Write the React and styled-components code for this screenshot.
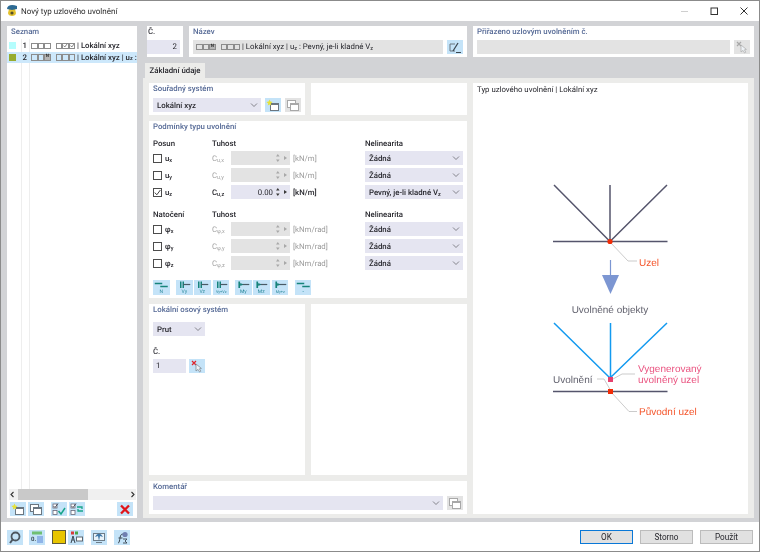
import React from 'react';
import styled, { createGlobalStyle } from 'styled-components';

const GlobalStyle = createGlobalStyle`
  html, body {
    margin: 0;
    padding: 0;
    background: #fff;
  }
  * {
    box-sizing: border-box;
  }
  body {
    font-family: Roboto, "Liberation Sans", sans-serif;
    font-size: 7.8px;
    color: #26262c;
    text-rendering: geometricPrecision;
  }
`;

const Window = styled.div`
  width: 760px;
  height: 552px;
  display: flex;
  flex-direction: column;
  border: 1px solid #8b8b8b;
  overflow: hidden;
  background: #fff;
  filter: blur(0.3px);
`;

const TitleBar = styled.div`
  height: 20px;
  flex: none;
  display: flex;
  align-items: center;
  padding: 0 11px 0 5px;
  gap: 3px;
  background: #fff;
`;

const TitleText = styled.div`
  flex: 1;
  font-size: 8px;
  color: #2b2b2b;
`;

const WindowButtons = styled.div`
  display: flex;
  align-items: center;
  gap: 22px;
`;

const Body = styled.div`
  flex: 1;
  display: flex;
  gap: 6px;
  padding: 5px 5px 4px 6px;
  background: #d2d3d6;
  min-height: 0;
`;

const Sidebar = styled.div`
  width: 130px;
  flex: none;
  display: flex;
  flex-direction: column;
  background: #fff;
`;

const Main = styled.div`
  flex: 1;
  min-width: 0;
  display: flex;
  flex-direction: column;
`;

const TopRow = styled.div`
  height: 31px;
  flex: none;
  display: flex;
  gap: 6px;
  padding-left: 4px;
`;

const Card = styled.div`
  background: #fff;
  width: ${(p) => (p.$width ? `${p.$width}px` : 'auto')};
  height: ${(p) => (p.$height ? `${p.$height}px` : 'auto')};
  flex: ${(p) => (p.$width || p.$height ? 'none' : '1')};
  padding: 0 4px;
`;

const NumberCard = styled(Card)`
  padding: 0 3px 0 0;
`;

const CardTitle = styled.div`
  height: 12px;
  line-height: 12px;
  font-weight: 500;
  color: ${(p) => (p.$plain ? '#3b3b42' : '#566a96')};
  padding-left: ${(p) => p.$indent || 0}px;
  margin-top: ${(p) => p.$top || 0}px;
  white-space: nowrap;
`;

const FieldRow = styled.div`
  display: flex;
  align-items: center;
  gap: ${(p) => (p.$tight ? 3 : 4)}px;
  margin-top: ${(p) => p.$top || 2}px;
`;

const Field = styled.div`
  height: 14px;
  line-height: 14px;
  padding: 0 3px;
  background: ${(p) => (p.$disabled ? '#e3e3e3' : '#e5e5f1')};
  color: ${(p) => (p.$disabled && !p.$dark ? '#8d8d8d' : '#26262c')};
  width: ${(p) => (p.$width ? `${p.$width}px` : 'auto')};
  flex: ${(p) => (p.$width ? 'none' : '1')};
  white-space: pre;
  overflow: hidden;
  display: flex;
  align-items: center;
  justify-content: ${(p) => (p.$right ? 'flex-end' : 'flex-start')};
`;

const SelectBox = styled.div`
  height: 14px;
  display: flex;
  align-items: center;
  justify-content: space-between;
  padding: 0 3px 0 4px;
  background: #e5e5f1;
  font-weight: 500;
  width: ${(p) => (p.$width ? `${p.$width}px` : 'auto')};
  flex: ${(p) => (p.$width ? 'none' : '1')};
  white-space: nowrap;
`;

const IconButton = styled.div`
  width: 16px;
  height: 14px;
  flex: none;
  display: flex;
  align-items: center;
  justify-content: center;
  background: ${(p) => (p.$off ? '#e3e3e3' : '#c4e3f8')};
`;

const Sub = styled.span`
  font-size: 5.5px;
  position: relative;
  top: 1.5px;
`;

/* list on the left */
const ListBody = styled.div`
  flex: 1;
  min-height: 0;
  display: flex;
  flex-direction: column;
  padding-top: 1px;
  background: linear-gradient(#eeeeee, #eeeeee) 14px 0 / 1px 100% no-repeat,
    linear-gradient(#eeeeee, #eeeeee) 22px 0 / 1px 100% no-repeat;
`;

const ListRow = styled.div`
  height: 11.5px;
  display: flex;
  align-items: center;
  white-space: pre;
  overflow: hidden;
  font-weight: 500;
  background: ${(p) => (p.$active ? '#cde8fb' : 'transparent')};
`;

const Swatch = styled.span`
  width: 7px;
  height: 7px;
  margin: 0 6px 0 2px;
  flex: none;
  background: ${(p) => p.$color};
`;

const RowNumber = styled.span`
  width: 5px;
  margin-right: 4px;
  flex: none;
  text-align: right;
`;

const Glyphs = styled.span`
  display: inline-flex;
  flex: none;
  margin-right: ${(p) => p.$gap}px;
`;

const Glyph = styled.span`
  width: 6.5px;
  height: 6.5px;
  flex: none;
  border: 0.8px solid #8c8c8c;
  display: inline-flex;
  align-items: center;
  justify-content: center;
  font-size: 4.5px;
  line-height: 4.5px;
  font-weight: 700;
  color: #2e2e2e;
  background: ${(p) => (p.$filled ? '#b5b5b5' : 'transparent')};
`;

const ScrollBar = styled.div`
  height: 11px;
  flex: none;
  margin: 0 1px 0 2px;
  display: flex;
  align-items: center;
  background: #f0f0f0;
`;

const ScrollThumb = styled.div`
  width: 70px;
  height: 100%;
  background: #c9c9c9;
  margin: 0 auto 0 2px;
`;

const ListTools = styled.div`
  height: 18px;
  flex: none;
  display: flex;
  align-items: center;
  padding: 0 3px;
  gap: 2px;
`;

const ToolGap = styled.div`
  width: ${(p) => p.$w}px;
  flex: none;
`;

/* tab area */
const TabStrip = styled.div`
  height: 15px;
  margin-top: 6px;
  padding-left: 2px;
  flex: none;
  display: flex;
`;

const Tab = styled.div`
  width: 60px;
  line-height: 16px;
  text-align: center;
  font-weight: 500;
  background: #ececea;
`;

const TabPanel = styled.div`
  flex: 1;
  min-height: 0;
  display: grid;
  grid-template-columns: 318px 275px;
  gap: 6px;
  padding: 5px 6px 4px;
  background: #ececea;
`;

const LeftStack = styled.div`
  display: flex;
  flex-direction: column;
  gap: 6px;
`;

const SplitRow = styled.div`
  display: flex;
  gap: 6px;
`;

const ConditionGrid = styled.div`
  display: grid;
  grid-template-columns: 59px 19px 59px 75px 98px;
  grid-template-rows: 11px;
  grid-auto-rows: 14px;
  row-gap: 3px;
  align-items: center;
  margin-top: ${(p) => p.$top}px;
`;

const HeadCell = styled.div`
  font-weight: 500;
  grid-column: ${(p) => p.$column || 'auto'};
  line-height: 12px;
  margin-top: 2px;
`;

const CheckCell = styled.label`
  display: flex;
  align-items: center;
  gap: 3px;
  font-weight: 500;
`;

const CheckBox = styled.span`
  width: 9px;
  height: 9px;
  flex: none;
  display: flex;
  align-items: center;
  justify-content: center;
  border: 1px solid #4c4c4c;
  background: #fff;
`;

const StiffLabel = styled.div`
  color: ${(p) => (p.$on ? '#26262c' : '#a3a3a3')};
  font-weight: ${(p) => (p.$on ? 500 : 400)};
`;

const Spin = styled.div`
  height: 14px;
  display: flex;
  align-items: center;
  justify-content: flex-end;
  gap: 2px;
  padding-right: 2px;
  background: ${(p) => (p.$on ? '#e5e5f1' : '#e3e3e3')};
`;

const Unit = styled.div`
  padding-left: 3px;
  color: ${(p) => (p.$on ? '#26262c' : '#9a9a9a')};
  font-weight: ${(p) => (p.$on ? 500 : 400)};
`;

const ReleaseBar = styled.div`
  display: flex;
  margin-top: 10px;
`;

const ReleaseButton = styled.div`
  width: 16.5px;
  height: 15px;
  margin-left: ${(p) => p.$gap || 1.8}px;
  flex: none;
  background: #c4e3f8;
  &:first-child {
    margin-left: 0;
  }
`;

const DiagramCard = styled.div`
  background: #fff;
  display: flex;
  flex-direction: column;
`;

const DiagramTitle = styled.div`
  height: 14px;
  line-height: 14px;
  padding-left: 4px;
  flex: none;
`;

/* bottom bar */
const Footer = styled.div`
  height: 29px;
  flex: none;
  display: flex;
  align-items: center;
  justify-content: space-between;
  padding: 1px 6px 0 6px;
  background: #fff;
`;

const FooterTools = styled.div`
  display: flex;
  align-items: center;
`;

const FootTool = styled(IconButton)`
  height: 15px;
  margin-left: ${(p) => p.$gap}px;
`;

const ColorChip = styled.div`
  width: 14px;
  height: 14px;
  margin-left: 7px;
  margin-right: 2px;
  background: #e8c500;
  border: 1px solid #5f5a3a;
`;

const DialogButtons = styled.div`
  display: flex;
  gap: 7px;
`;

const DialogButton = styled.button`
  width: 53px;
  height: 14px;
  padding: 0;
  font: inherit;
  font-size: 8.2px;
  color: #26262c;
  background: #e1e1e1;
  border: 1px solid ${(p) => (p.$primary ? '#0a78d7' : '#bcbcbc')};
`;

const Chevron = () => (
  <svg width="8" height="6" viewBox="0 0 8 6">
    <path d="M1 1.5 L4 4.5 L7 1.5" fill="none" stroke="#77777f" strokeWidth="0.9" />
  </svg>
);

const Spinner = ({ on }) => (
  <svg width="13" height="10" viewBox="0 0 13 10">
    <path d="M1 3.5 L2.8 1 L4.6 3.5Z M1 6.5 L2.8 9 L4.6 6.5Z" fill={on ? '#3a3a3a' : '#a8a8a8'} />
    <path d="M9 3 L12 5 L9 7Z" fill={on ? '#3a3a3a' : '#a8a8a8'} />
  </svg>
);

const Tick = ({ color = '#444' }) => (
  <svg width="7" height="7" viewBox="0 0 7 7">
    <path d="M0.8 3.6 L2.8 5.8 L6.4 1" fill="none" stroke={color} strokeWidth="1" />
  </svg>
);

const Logo = () => (
  <svg width="12" height="14" viewBox="0 0 12 14">
    <path d="M2 9 C2 13 10 13 10 9 L9 5 L3 5Z" fill="#e4c22e" />
    <circle cx="6" cy="9" r="1.6" fill="#54502a" />
    <path d="M1 5 C1 1 6 0 11 2 L11 5 L6 6Z" fill="#2d6a94" />
  </svg>
);

const NewIcon = () => (
  <svg width="14" height="13" viewBox="0 0 14 13">
    <rect x="4.5" y="4.5" width="8" height="7" fill="#fff" stroke="#6b7680" />
    <rect x="4.5" y="4.5" width="8" height="1.5" fill="#6b7680" />
    <path d="M3.5 0.5 L4.4 2.6 L6.6 3 L4.8 4.4 L5.2 6.6 L3.5 5.4 L1.8 6.6 L2.2 4.4 L0.4 3 L2.6 2.6Z" fill="#e6e23a" />
  </svg>
);

const CopyIcon = ({ off }) => (
  <svg width="14" height="13" viewBox="0 0 14 13">
    <rect x="1.5" y="1.5" width="8" height="7" fill="#fff" stroke={off ? '#a8a8a8' : '#6b7680'} />
    <rect x="4.5" y="4.5" width="8" height="7" fill="#fff" stroke={off ? '#a8a8a8' : '#6b7680'} />
    <rect x="4.5" y="4.5" width="8" height="1.5" fill={off ? '#a8a8a8' : '#6b7680'} />
  </svg>
);

const CheckListIcon = ({ swap }) => (
  <svg width="14" height="13" viewBox="0 0 14 13">
    <rect x="1" y="1" width="4" height="4" fill="#fff" stroke="#667" strokeWidth="0.8" />
    <rect x="1" y="7.5" width="4" height="4" fill="#fff" stroke="#667" strokeWidth="0.8" />
    <path d="M1.5 3 L3 4.5 L6 0.5" fill="none" stroke="#334" strokeWidth="0.8" />
    {swap ? (
      <path d="M7 4 H12 V6 M13 8 H8 V6" fill="none" stroke="#17a58a" strokeWidth="1.3" />
    ) : (
      <path d="M6.5 8 L9 11 L13 5" fill="none" stroke="#17a58a" strokeWidth="1.5" />
    )}
  </svg>
);

const DeleteIcon = () => (
  <svg width="12" height="11" viewBox="0 0 12 11">
    <path d="M2 1.5 L10 9.5 M10 1.5 L2 9.5" stroke="#e0161b" strokeWidth="2.3" />
  </svg>
);

const EditIcon = () => (
  <svg width="14" height="13" viewBox="0 0 14 13">
    <path d="M2 3 H7 M2 3 V10 H7" fill="none" stroke="#6b7680" />
    <path d="M5 10 L10 2" stroke="#3b4650" strokeWidth="1.3" />
    <path d="M8 11.5 H13" stroke="#3b4650" />
  </svg>
);

const PickIcon = ({ off }) => (
  <svg width="14" height="13" viewBox="0 0 14 13">
    <path d="M2 1 L6 5 M6 1 L2 5" stroke={off ? '#a8a8a8' : '#e0242c'} strokeWidth="1.2" />
    <path d="M6 4 L6 11 L8 9.4 L9.6 12 L10.8 11.2 L9.4 8.8 L11.4 8.4Z" fill="#eef2f6" stroke={off ? '#aaa' : '#77828c'} strokeWidth="0.7" />
  </svg>
);

const ReleaseIcon = ({ label, kind }) => (
  <svg width="16.5" height="15" viewBox="0 0 16 15">
    {kind === 'n' && <path d="M1.5 3.5 H9 M7 6.5 H14.5" stroke="#16837b" strokeWidth="1.5" />}
    {kind === 'v' && (
      <>
        <path d="M4.5 1.5 V8 M7 1.5 V8" stroke="#16837b" strokeWidth="1.5" />
        <path d="M7 4.5 H14" stroke="#4a5a66" strokeWidth="1.2" />
      </>
    )}
    {kind === 'm' && (
      <>
        <path d="M4 1.5 V8" stroke="#16837b" strokeWidth="1.7" />
        <path d="M5 4.5 H14" stroke="#4a5a66" strokeWidth="1.2" />
        <path d="M5 3 L8 4.5 L5 6Z" fill="#16837b" />
      </>
    )}
    <text x="8" y="13" textAnchor="middle" fontSize={label.length > 2 ? 3.8 : 5} fill="#2c8a9c" fontFamily="Roboto, sans-serif">
      {label}
    </text>
  </svg>
);

const FootIcon = ({ kind }) => (
  <svg width="14" height="13" viewBox="0 0 14 13">
    {kind === 'search' && (
      <>
        <circle cx="7.5" cy="5.5" r="4" fill="none" stroke="#4c5660" strokeWidth="1.8" />
        <path d="M5 8 L2 12" stroke="#4c5660" strokeWidth="2" />
      </>
    )}
    {kind === 'table' && (
      <>
        <rect x="2" y="0.5" width="10" height="3" fill="#6fbf73" />
        <text x="1" y="10" fontSize="6" fontWeight="700" fill="#3d4a55" fontFamily="Roboto, sans-serif">0.</text>
        <rect x="7" y="5" width="6" height="7" fill="#8fb4e8" />
      </>
    )}
    {kind === 'tree' && (
      <>
        <rect x="2" y="0.5" width="3" height="3" fill="#d93a3a" />
        <rect x="6" y="0.5" width="3" height="3" fill="#4aa64a" />
        <path d="M2 12 L4 5 L6 12 M3 9 H5" fill="none" stroke="#3b4650" />
        <rect x="7.5" y="6" width="6" height="4" fill="#fff" stroke="#5c6670" />
      </>
    )}
    {kind === 'view' && (
      <>
        <rect x="1.5" y="2.5" width="11" height="7" fill="#e9f3fa" stroke="#6d7d8a" />
        <path d="M3 6 C5 1.5 9 1.5 11 6 L8 5 L7 10 L6 5Z" fill="#3f78a8" />
        <path d="M4 11.5 H10" stroke="#6d7d8a" />
      </>
    )}
    {kind === 'fn' && (
      <>
        <path d="M3 12 C5 12 4.5 6 6 4 C6.5 3 7.5 3 8 3.4 M3.5 7 H7.5" fill="none" stroke="#3a4650" strokeWidth="1" />
        <path d="M8 8 H12 L10 10 L12 12 H8" fill="none" stroke="#3a4650" strokeWidth="0.9" />
        <circle cx="10" cy="3.5" r="2.6" fill="#6f7fb0" />
      </>
    )}
  </svg>
);

const ReleaseDiagram = () => (
  <svg width="275" height="417" viewBox="473 97 275 417" fontFamily="Liberation Sans, sans-serif" fontSize="10">
    <g fill="none" stroke="#55556c" strokeWidth="1.5">
      <path d="M554 185 L610 241.5 M610 185 V241.5 M667 185 L610 241.5" />
      <path d="M553 241.5 H667.5" />
    </g>
    <path d="M610 242 L628 261 H637" fill="none" stroke="#b5b5b5" strokeWidth="0.7" />
    <circle cx="610" cy="241.5" r="2.6" fill="#f22c06" />
    <text x="639" y="265.5" fill="#f4552b">Uzel</text>

    <path d="M610.5 260 V276" stroke="#7c96d2" strokeWidth="1.2" />
    <path d="M602 275 H619 L610.5 294Z" fill="#7c96d2" />

    <text x="610" y="312.5" textAnchor="middle" fill="#62626e">Uvolněné objekty</text>
    <path d="M554 323 L610 378 M610.5 323 V378 M667 323 L610 378" fill="none" stroke="#139af0" strokeWidth="1.5" />
    <path d="M553 391.5 H667.5" stroke="#55556c" strokeWidth="1.5" />
    <path d="M613 379 L622 374 H635 M597 379 H604 L611 391 M611 392 L629 411.5 H637" fill="none" stroke="#b5b5b5" strokeWidth="0.7" />
    <rect x="608" y="377" width="5" height="5" fill="#e6406e" />
    <rect x="608" y="389" width="5" height="5" fill="#f22c06" />
    <text x="638" y="371.5" fill="#ea5480">Vygenerovaný</text>
    <text x="638" y="383" fill="#ea5480">uvolněný uzel</text>
    <text x="553" y="383" fill="#62626e">Uvolnění</text>
    <text x="639" y="414.5" fill="#f4552b">Původní uzel</text>
  </svg>
);

const translationRows = [
  { axis: 'x', on: false, value: 'Žádná' },
  { axis: 'y', on: false, value: 'Žádná' },
  { axis: 'z', on: true, value: <>Pevný, je-li kladné V<Sub>z</Sub></> },
];

const rotationAxes = ['x', 'y', 'z'];

const releaseButtons = [
  { label: 'N', kind: 'n' },
  { label: 'Vy', kind: 'v', gap: 6.5 },
  { label: 'Vz', kind: 'v' },
  { label: 'Vy+Vz', kind: 'v' },
  { label: 'My', kind: 'm', gap: 6 },
  { label: 'Mz', kind: 'm' },
  { label: 'My+z', kind: 'm' },
  { label: '-', kind: 'n', gap: 6.5 },
];

const ConditionRow = ({ symbol, index, axis, on, unit, value, amount }) => (
  <>
    <CheckCell>
      <CheckBox>{on && <Tick />}</CheckBox>
      <span>{symbol}<Sub>{axis}</Sub></span>
    </CheckCell>
    <StiffLabel $on={on}>C<Sub>{index},{axis}</Sub></StiffLabel>
    <Spin $on={on}>
      {amount && <span>{amount}</span>}
      <Spinner on={on} />
    </Spin>
    <Unit $on={on}>{unit}</Unit>
    <SelectBox>
      <span>{value}</span>
      <Chevron />
    </SelectBox>
  </>
);

const App = () => {
  return (
    <>
      <GlobalStyle />
      <Window>
        <TitleBar>
          <Logo />
          <TitleText>Nový typ uzlového uvolnění</TitleText>
          <WindowButtons>
            <svg width="7" height="9" viewBox="0 0 7 9"><path d="M0 4.5 H7" stroke="#cfcfcf" /></svg>
            <svg width="8" height="8" viewBox="0 0 8 8"><rect x="1" y="1" width="6.5" height="6.5" fill="none" stroke="#333" /></svg>
            <svg width="8" height="8" viewBox="0 0 8 8"><path d="M0.5 0.5 L7.5 7.5 M7.5 0.5 L0.5 7.5" stroke="#333" /></svg>
          </WindowButtons>
        </TitleBar>

        <Body>
          <Sidebar>
            <Card $height={13}><CardTitle>Seznam</CardTitle></Card>
            <ListBody>
              <ListRow>
                <Swatch $color="#b5fdfd" />
                <RowNumber>1</RowNumber>
                <Glyphs $gap={5}><Glyph /><Glyph /><Glyph /></Glyphs>
                <Glyphs $gap={2}>
                  <Glyph /><Glyph><Tick /></Glyph><Glyph><Tick /></Glyph>
                </Glyphs>
                | Lokální xyz
              </ListRow>
              <ListRow $active>
                <Swatch $color="#97ac2f" />
                <RowNumber>2</RowNumber>
                <Glyphs $gap={5}><Glyph /><Glyph /><Glyph $filled>N</Glyph></Glyphs>
                <Glyphs $gap={2}><Glyph /><Glyph /><Glyph /></Glyphs>
                | Lokální xyz | u<Sub>z</Sub> : Pevný, je-li kladné V<Sub>z</Sub>
              </ListRow>
            </ListBody>
            <ScrollBar>
              <svg width="7" height="7" viewBox="0 0 7 7"><path d="M4.5 1 L2 3.5 L4.5 6" fill="none" stroke="#333" strokeWidth="1.1" /></svg>
              <ScrollThumb />
              <svg width="7" height="7" viewBox="0 0 7 7"><path d="M2.5 1 L5 3.5 L2.5 6" fill="none" stroke="#333" strokeWidth="1.1" /></svg>
            </ScrollBar>
            <ListTools>
              <IconButton><NewIcon /></IconButton>
              <IconButton><CopyIcon /></IconButton>
              <ToolGap $w={3} />
              <IconButton><CheckListIcon /></IconButton>
              <IconButton><CheckListIcon swap /></IconButton>
              <ToolGap $w={28} />
              <IconButton><DeleteIcon /></IconButton>
            </ListTools>
          </Sidebar>

          <Main>
            <TopRow>
              <NumberCard $width={36}>
                <CardTitle $plain $indent={1}>Č.</CardTitle>
                <FieldRow><Field $right>2</Field></FieldRow>
              </NumberCard>
              <Card $width={278}>
                <CardTitle>Název</CardTitle>
                <FieldRow>
                  <Field $disabled $dark>
                    <Glyphs $gap={5}><Glyph /><Glyph /><Glyph $filled>N</Glyph></Glyphs>
                    <Glyphs $gap={2}><Glyph /><Glyph /><Glyph /></Glyphs>
                    | Lokální xyz | u<Sub>z</Sub> : Pevný, je-li kladné V<Sub>z</Sub>
                  </Field>
                  <IconButton><EditIcon /></IconButton>
                </FieldRow>
              </Card>
              <Card>
                <CardTitle>Přiřazeno uzlovým uvolněním č.</CardTitle>
                <FieldRow>
                  <Field $disabled />
                  <IconButton $off><PickIcon off /></IconButton>
                </FieldRow>
              </Card>
            </TopRow>

            <TabStrip><Tab>Základní údaje</Tab></TabStrip>

            <TabPanel>
              <LeftStack>
                <SplitRow>
                  <Card $width={156} $height={32}>
                    <CardTitle>Souřadný systém</CardTitle>
                    <FieldRow $top={3}>
                      <SelectBox><span>Lokální xyz</span><Chevron /></SelectBox>
                      <IconButton><NewIcon /></IconButton>
                      <IconButton $off><CopyIcon off /></IconButton>
                    </FieldRow>
                  </Card>
                  <Card $width={156} $height={32} />
                </SplitRow>

                <Card $height={177}>
                  <CardTitle>Podmínky typu uvolnění</CardTitle>
                  <ConditionGrid $top={4}>
                    <HeadCell>Posun</HeadCell>
                    <HeadCell $column="2 / 5">Tuhost</HeadCell>
                    <HeadCell>Nelinearita</HeadCell>
                    {translationRows.map((row) => (
                      <ConditionRow
                        key={row.axis}
                        symbol="u"
                        index="u"
                        axis={row.axis}
                        on={row.on}
                        unit="[kN/m]"
                        value={row.value}
                        amount={row.on ? '0.00' : null}
                      />
                    ))}
                  </ConditionGrid>
                  <ConditionGrid $top={9}>
                    <HeadCell>Natočení</HeadCell>
                    <HeadCell $column="2 / 5">Tuhost</HeadCell>
                    <HeadCell>Nelinearita</HeadCell>
                    {rotationAxes.map((axis) => (
                      <ConditionRow
                        key={axis}
                        symbol="φ"
                        index="φ"
                        axis={axis}
                        on={false}
                        unit="[kNm/rad]"
                        value="Žádná"
                      />
                    ))}
                  </ConditionGrid>
                  <ReleaseBar>
                    {releaseButtons.map((b) => (
                      <ReleaseButton key={b.label} $gap={b.gap}>
                        <ReleaseIcon label={b.label} kind={b.kind} />
                      </ReleaseButton>
                    ))}
                  </ReleaseBar>
                </Card>

                <SplitRow>
                  <Card $width={156} $height={171}>
                    <CardTitle>Lokální osový systém</CardTitle>
                    <FieldRow $top={6}>
                      <SelectBox $width={52}><span>Prut</span><Chevron /></SelectBox>
                    </FieldRow>
                    <CardTitle $plain $top={10}>Č.</CardTitle>
                    <FieldRow $top={1} $tight>
                      <Field $width={33}>1</Field>
                      <IconButton><PickIcon /></IconButton>
                    </FieldRow>
                  </Card>
                  <Card $width={156} $height={171} />
                </SplitRow>

                <Card $height={33}>
                  <CardTitle>Komentář</CardTitle>
                  <FieldRow $top={3}>
                    <SelectBox><span /><Chevron /></SelectBox>
                    <IconButton $off><CopyIcon off /></IconButton>
                  </FieldRow>
                </Card>
              </LeftStack>

              <DiagramCard>
                <DiagramTitle>Typ uzlového uvolnění | Lokální xyz</DiagramTitle>
                <ReleaseDiagram />
              </DiagramCard>
            </TabPanel>
          </Main>
        </Body>

        <Footer>
          <FooterTools>
            <FootTool $gap={0}><FootIcon kind="search" /></FootTool>
            <FootTool $gap={6}><FootIcon kind="table" /></FootTool>
            <ColorChip />
            <FootTool $gap={0}><FootIcon kind="tree" /></FootTool>
            <FootTool $gap={7}><FootIcon kind="view" /></FootTool>
            <FootTool $gap={7}><FootIcon kind="fn" /></FootTool>
          </FooterTools>
          <DialogButtons>
            <DialogButton $primary>OK</DialogButton>
            <DialogButton>Storno</DialogButton>
            <DialogButton>Použít</DialogButton>
          </DialogButtons>
        </Footer>
      </Window>
    </>
  );
};

export default App;
